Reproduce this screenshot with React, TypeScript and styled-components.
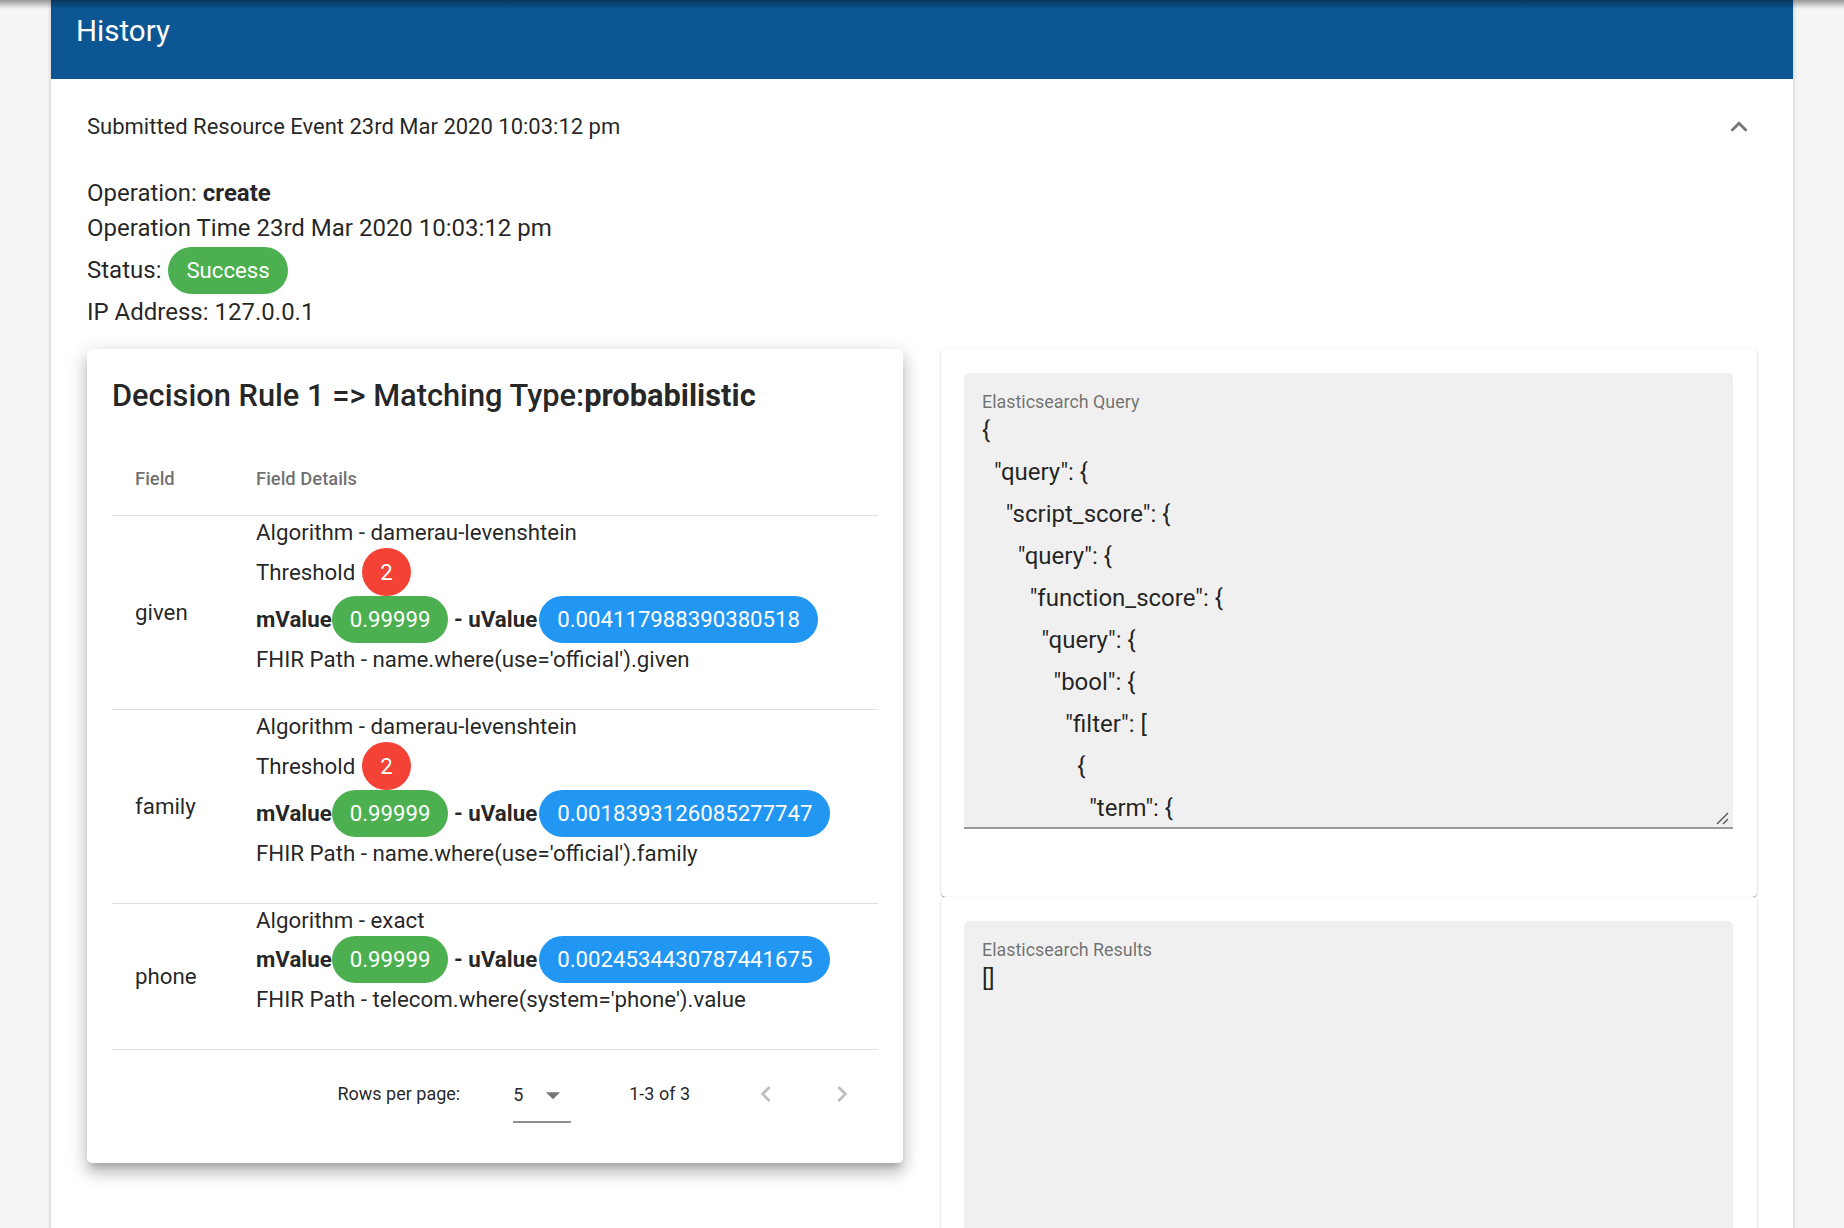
import React from "react";
import styled, { createGlobalStyle } from "styled-components";

const GlobalStyle = createGlobalStyle`
  html, body {
    margin: 0;
    padding: 0;
  }
  body {
    background: #f5f5f5;
    font-family: Roboto, "Helvetica Neue", Arial, sans-serif;
    color: rgba(0, 0, 0, 0.87);
  }
  * { box-sizing: border-box; }
`;

const Page = styled.div`
  position: relative;
  padding: 0 51px;
  min-height: 100vh;
  &::after {
    content: "";
    position: absolute;
    left: 0;
    right: 0;
    top: 0;
    height: 9px;
    background: linear-gradient(rgba(0, 0, 0, 0.38), rgba(0, 0, 0, 0));
    pointer-events: none;
  }
`;

const Shell = styled.div`
  background: #ffffff;
  box-shadow: 0 0 4px rgba(0, 0, 0, 0.22);
  min-height: 1500px;
`;

const AppHeader = styled.header`
  height: 79px;
  background: #0b5693;
  color: #ffffff;
  padding: 8px 25px 0;
  font-size: 29.5px;
  line-height: 47px;
  font-weight: 400;
`;

const Summary = styled.div`
  height: 96px;
  display: flex;
  align-items: center;
  justify-content: space-between;
  padding: 0 37px 0 36px;
  font-size: 22px;
  line-height: 32px;
`;

const Details = styled.div`
  padding: 1px 36px 0;
`;

const InfoLine = styled.div`
  font-size: 24px;
  line-height: 35px;
`;

const StatusLine = styled.div`
  display: flex;
  align-items: center;
  height: 49px;
  font-size: 24px;
  line-height: 35px;
`;

const Chip = styled.span<{ $bg: string; $h?: number; $ml?: number }>`
  display: inline-flex;
  align-items: center;
  justify-content: center;
  height: ${(p) => p.$h ?? 47}px;
  padding: 0 18px;
  margin-left: ${(p) => p.$ml ?? 0}px;
  border-radius: 24px;
  background: ${(p) => p.$bg};
  color: #ffffff;
  font-size: 22.2px;
  font-weight: 400;
  white-space: nowrap;
`;

const Columns = styled.div`
  display: grid;
  grid-template-columns: 1fr 1fr;
  column-gap: 38px;
  align-items: start;
  margin-top: 19px;
`;

const DecisionCard = styled.section`
  background: #ffffff;
  border-radius: 5px;
  padding: 25px;
  box-shadow: 0 7px 7px -4px rgba(0, 0, 0, 0.2), 0 11px 14px 1px rgba(0, 0, 0, 0.14),
    0 4px 19px 3px rgba(0, 0, 0, 0.12);
`;

const CardTitle = styled.h2`
  margin: 0 0 26px;
  font-size: 30.8px;
  line-height: 43px;
  font-weight: 500;
  white-space: nowrap;
  b {
    font-weight: 700;
  }
`;

const Table = styled.table`
  width: 100%;
  border-collapse: collapse;
`;

const HeadCell = styled.th<{ $first?: boolean }>`
  height: 72px;
  padding: 0 0 0 ${(p) => (p.$first ? 23 : 22)}px;
  width: ${(p) => (p.$first ? "122px" : "auto")};
  text-align: left;
  font-size: 18.4px;
  font-weight: 500;
  color: rgba(0, 0, 0, 0.58);
  border-bottom: 1px solid #e0e0e0;
`;

const Row = styled.tr`
  border-bottom: 1px solid #e0e0e0;
`;

const FieldCell = styled.td`
  padding: 0 0 0 23px;
  vertical-align: middle;
  font-size: 22.3px;
`;

const DetailsCell = styled.td`
  padding: 0 0 34px 22px;
  vertical-align: top;
  font-size: 22.3px;
`;

const TextLine = styled.div`
  line-height: 32px;
  white-space: nowrap;
`;

const ChipLine = styled.div<{ $h: number }>`
  display: flex;
  align-items: center;
  height: ${(p) => p.$h}px;
  white-space: pre;
`;

const Strong = styled.b`
  font-weight: 700;
`;

const Pagination = styled.div`
  display: flex;
  align-items: center;
  justify-content: flex-end;
  height: 88px;
  padding-right: 4px;
  font-size: 18px;
`;

const Caption = styled.span<{ $mr: number }>`
  margin-right: ${(p) => p.$mr}px;
  color: rgba(0, 0, 0, 0.87);
`;

const SelectBox = styled.div`
  display: flex;
  align-items: center;
  width: 58px;
  height: 54px;
  margin-right: 58px;
  margin-top: 4px;
  border-bottom: 2px solid #8f8f8f;
  svg {
    margin-left: 13px;
  }
`;

const Actions = styled.div`
  display: flex;
  gap: 12px;
`;

const IconButton = styled.button`
  display: flex;
  align-items: center;
  justify-content: center;
  width: 64px;
  height: 64px;
  padding: 0;
  border: none;
  border-radius: 50%;
  background: transparent;
`;

const SideColumn = styled.div`
  display: flex;
  flex-direction: column;
`;

const SideCard = styled.section<{ $pb: number }>`
  background: #ffffff;
  border-radius: 5px;
  padding: 24px 24px ${(p) => p.$pb}px 23px;
  box-shadow: 0 1px 3px rgba(0, 0, 0, 0.2), 0 1px 1px rgba(0, 0, 0, 0.14),
    0 2px 1px -1px rgba(0, 0, 0, 0.12);
`;

const FilledField = styled.div`
  position: relative;
  height: 456px;
  padding: 20px 18px 0;
  background: #f0f0f0;
  border-radius: 5px 5px 0 0;
  border-bottom: 2px solid #9a9a9a;
`;

const FieldLabel = styled.div`
  font-size: 17.9px;
  line-height: 17px;
  color: rgba(0, 0, 0, 0.55);
`;

const CodeText = styled.div`
  margin-top: -1px;
  height: 414px;
  overflow: hidden;
  white-space: pre;
  font-size: 24px;
  line-height: 42px;
`;

const ResizeGrip = styled.svg`
  position: absolute;
  right: 3px;
  bottom: 1px;
`;

const QUERY = `{
  "query": {
    "script_score": {
      "query": {
        "function_score": {
          "query": {
            "bool": {
              "filter": [
                {
                  "term": {
                    "gender": "female"
                  }
                }
              ]
            }
          }
        }
      }
    }
  }
}`;

type Rule = {
  field: string;
  algorithm: string;
  threshold?: number;
  m: string;
  u: string;
  path: string;
};

const RULES: Rule[] = [
  {
    field: "given",
    algorithm: "damerau-levenshtein",
    threshold: 2,
    m: "0.99999",
    u: "0.004117988390380518",
    path: "name.where(use='official').given",
  },
  {
    field: "family",
    algorithm: "damerau-levenshtein",
    threshold: 2,
    m: "0.99999",
    u: "0.0018393126085277747",
    path: "name.where(use='official').family",
  },
  {
    field: "phone",
    algorithm: "exact",
    m: "0.99999",
    u: "0.0024534430787441675",
    path: "telecom.where(system='phone').value",
  },
];

const ExpandLess = () => (
  <svg width="34" height="34" viewBox="0 0 24 24">
    <path d="M12 8l-6 6 1.41 1.41L12 10.83l4.59 4.58L18 14z" fill="rgba(0,0,0,0.54)" />
  </svg>
);

const DropArrow = () => (
  <svg width="34" height="34" viewBox="0 0 24 24">
    <path d="M7 10l5 5 5-5z" fill="rgba(0,0,0,0.54)" />
  </svg>
);

const ChevronLeft = () => (
  <svg width="32" height="32" viewBox="0 0 24 24">
    <path d="M15.41 16.59L10.83 12l4.58-4.59L14 6l-6 6 6 6 1.41-1.41z" fill="rgba(0,0,0,0.26)" />
  </svg>
);

const ChevronRight = () => (
  <svg width="32" height="32" viewBox="0 0 24 24">
    <path d="M8.59 16.59L13.17 12 8.59 7.41 10 6l6 6-6 6-1.41-1.41z" fill="rgba(0,0,0,0.26)" />
  </svg>
);

const Grip = () => (
  <ResizeGrip width="16" height="16" viewBox="0 0 16 16">
    <path d="M14 3L3 14M14 9L9 14" stroke="#555" strokeWidth="1.4" fill="none" />
  </ResizeGrip>
);

export default function App() {
  return (
    <>
      <GlobalStyle />
      <Page>
        <Shell>
          <AppHeader>History</AppHeader>
          <Summary>
            <span>Submitted Resource Event 23rd Mar 2020 10:03:12 pm</span>
            <ExpandLess />
          </Summary>
          <Details>
            <InfoLine>
              Operation: <Strong>create</Strong>
            </InfoLine>
            <InfoLine>Operation Time 23rd Mar 2020 10:03:12 pm</InfoLine>
            <StatusLine>
              Status:
              <Chip $bg="#4caf50" $ml={7}>
                Success
              </Chip>
            </StatusLine>
            <InfoLine>IP Address: 127.0.0.1</InfoLine>

            <Columns>
              <DecisionCard>
                <CardTitle>
                  Decision Rule 1 =&gt; Matching Type:<b>probabilistic</b>
                </CardTitle>
                <Table>
                  <thead>
                    <tr>
                      <HeadCell $first>Field</HeadCell>
                      <HeadCell>Field Details</HeadCell>
                    </tr>
                  </thead>
                  <tbody>
                    {RULES.map((r) => (
                      <Row key={r.field}>
                        <FieldCell>{r.field}</FieldCell>
                        <DetailsCell>
                          <TextLine>Algorithm - {r.algorithm}</TextLine>
                          {r.threshold !== undefined && (
                            <ChipLine $h={48}>
                              Threshold
                              <Chip $bg="#f44336" $h={48} $ml={7}>
                                {r.threshold}
                              </Chip>
                            </ChipLine>
                          )}
                          <ChipLine $h={47}>
                            <Strong>mValue</Strong>
                            <Chip $bg="#4caf50">{r.m}</Chip>
                            <Strong> - uValue</Strong>
                            <Chip $bg="#2196f3" $ml={2}>
                              {r.u}
                            </Chip>
                          </ChipLine>
                          <TextLine>FHIR Path - {r.path}</TextLine>
                        </DetailsCell>
                      </Row>
                    ))}
                  </tbody>
                </Table>
                <Pagination>
                  <Caption $mr={53}>Rows per page:</Caption>
                  <SelectBox>
                    <span>5</span>
                    <DropArrow />
                  </SelectBox>
                  <Caption $mr={44}>1-3 of 3</Caption>
                  <Actions>
                    <IconButton aria-label="Previous page">
                      <ChevronLeft />
                    </IconButton>
                    <IconButton aria-label="Next page">
                      <ChevronRight />
                    </IconButton>
                  </Actions>
                </Pagination>
              </DecisionCard>

              <SideColumn>
                <SideCard $pb={68}>
                  <FilledField>
                    <FieldLabel>Elasticsearch Query</FieldLabel>
                    <CodeText>{QUERY}</CodeText>
                    <Grip />
                  </FilledField>
                </SideCard>
                <SideCard $pb={68}>
                  <FilledField>
                    <FieldLabel>Elasticsearch Results</FieldLabel>
                    <CodeText>[]</CodeText>
                    <Grip />
                  </FilledField>
                </SideCard>
              </SideColumn>
            </Columns>
          </Details>
        </Shell>
      </Page>
    </>
  );
}
